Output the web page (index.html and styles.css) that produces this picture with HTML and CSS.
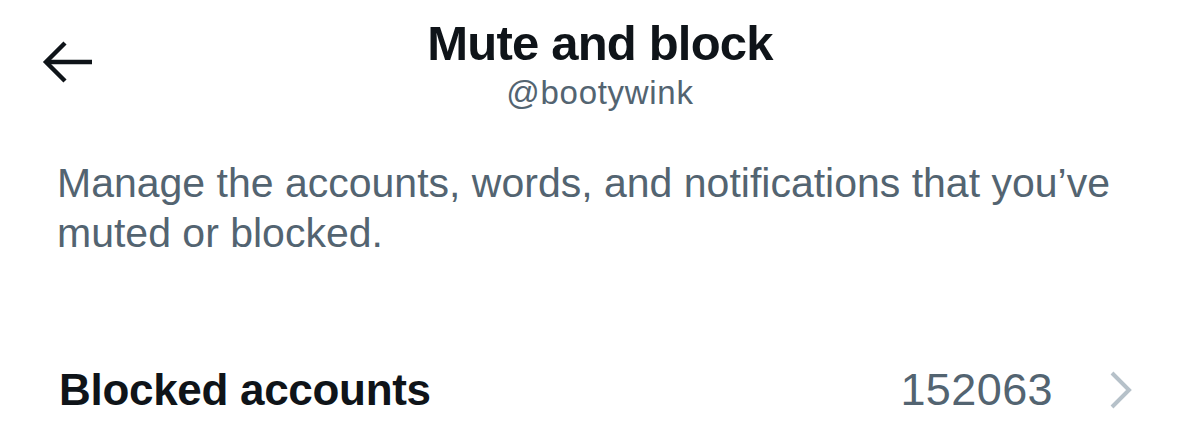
FILE: index.html
```html
<!DOCTYPE html>
<html lang="en">
<head>
<meta charset="utf-8">
<title>Mute and block</title>
<link rel="stylesheet" href="styles.css">
</head>
<body>
<div class="page">
  <header class="header">
    <button class="back" aria-label="Back">
      <svg width="60" height="48" viewBox="0 0 60 48" fill="none" stroke="#0f1419" stroke-width="4.4">
        <path d="M54 22H9"/>
        <path d="M27 3L8 22L27 41"/>
      </svg>
    </button>
    <div class="titles">
      <h1 class="title">Mute and block</h1>
      <div class="handle">@bootywink</div>
    </div>
  </header>
  <p class="desc">Manage the accounts, words, and notifications that you’ve muted or blocked.</p>
  <div class="row">
    <span class="row-label">Blocked accounts</span>
    <span class="row-right">
      <span class="count">152063</span>
      <svg class="chev" width="24" height="40" viewBox="0 0 24 40" fill="none" stroke="#b6c1c9" stroke-width="4">
        <path d="M3 3L20 20L3 37"/>
      </svg>
    </span>
  </div>
</div>
</body>
</html>
```
FILE: styles.css
```css
html, body {
  margin: 0;
  padding: 0;
  background: #ffffff;
}
.page {
  width: 1200px;
  height: 439px;
  overflow: hidden;
  font-family: "Liberation Sans", Arial, sans-serif;
  color: #0f1419;
}
.header {
  position: relative;
  padding-top: 15px;
  display: flex;
  justify-content: center;
}
.back {
  position: absolute;
  left: 38px;
  top: 40px;
  padding: 0;
  margin: 0;
  border: 0;
  background: none;
  display: flex;
}
.titles {
  display: flex;
  flex-direction: column;
  align-items: center;
}
.title {
  margin: 0;
  font-size: 49px;
  line-height: 56px;
  font-weight: 700;
  letter-spacing: -0.8px;
  color: #0f1419;
}
.handle {
  margin-top: 3px;
  font-size: 33px;
  line-height: 38px;
  letter-spacing: 0.7px;
  color: #536471;
}
.desc {
  margin: 46px 0 0 0;
  padding: 0 60px 0 57px;
  font-size: 41px;
  line-height: 50px;
  color: #536471;
}
.row {
  margin-top: 106px;
  padding: 0 67px 0 59px;
  display: flex;
  align-items: center;
  justify-content: space-between;
  height: 52px;
}
.row-label {
  font-size: 44px;
  font-weight: 700;
  color: #0f1419;
  letter-spacing: -0.3px;
}
.row-right {
  display: flex;
  align-items: center;
  gap: 56px;
}
.count {
  font-size: 45px;
  letter-spacing: 0.4px;
  color: #536471;
}
.chev {
  display: block;
}
```
